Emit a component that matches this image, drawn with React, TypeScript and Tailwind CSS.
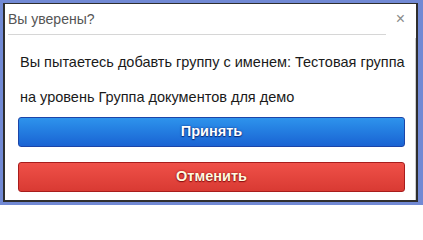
export default function App() {
  return (
    <div
      className="w-[423px] h-[205px] bg-[#7189d4] pl-[3px] pt-[3px] pr-[5px] pb-[3px]"
      style={{ fontFamily: '"Liberation Sans", Arial, sans-serif' }}
    >
      <div className="h-full flex border-[#2e2e2e] border-l-2 border-b-2 border-t border-r-2 bg-white">
        <div className="flex-1 flex flex-col">
          {/* Header */}
          <div className="flex items-center h-[30px] pl-[3px] pr-[10px]">
            <span className="text-[14px] text-[#555] flex-1">Вы уверены?</span>
            <span className="text-[16px] leading-none text-[#8a8a8a]">×</span>
          </div>
          <div className="ml-[3px] mr-[29px] h-px bg-[#d6d6d6]" />

          {/* Body */}
          <div className="pl-[15px] pr-[6px] pt-[15px] text-[14.5px] text-[#1a1a1a] whitespace-nowrap">
            <p className="leading-[24px]">Вы пытаетесь добавть группу с именем: Тестовая группа</p>
            <p className="leading-[24px] mt-[11px]">на уровень Группа документов для демо</p>
          </div>

          {/* Buttons */}
          <div className="pl-[13px] pr-[10px] mt-[8px] flex flex-col gap-[15px]">
            <button className="h-[30px] rounded-[3px] border border-[#1c45a8] bg-gradient-to-b from-[#2e93ec] to-[#1b63d3] text-white font-bold text-[14.5px] [text-shadow:0_0_2px_#0b2a78,0_1px_1px_#0b2a78]">
              Принять
            </button>
            <button className="h-[30px] rounded-[3px] border border-[#a81c1c] bg-gradient-to-b from-[#ef5048] to-[#d93a33] text-[#fffbe0] font-bold text-[14.5px] [text-shadow:0_0_2px_#8a0f0f,0_1px_1px_#8a0f0f]">
              Отменить
            </button>
          </div>
        </div>
        <div className="w-px mt-[34px] bg-[#cfcfcf]" />
      </div>
    </div>
  );
}
